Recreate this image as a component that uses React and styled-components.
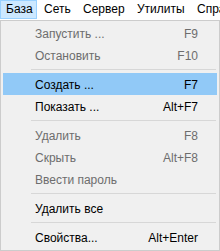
import React from "react";
import styled, { createGlobalStyle } from "styled-components";

const Global = createGlobalStyle`
  html, body { margin: 0; padding: 0; background: #ffffff; }
  body {
    font-family: "Segoe UI", "Liberation Sans", "Noto Sans", sans-serif;
    font-size: 12px;
    color: #000;
  }
`;

const menuBar = [
  { label: "База", width: 37 },
  { label: "Сеть", width: 38 },
  { label: "Сервер", width: 53 },
  { label: "Утилиты", width: 59 },
  { label: "Справка", width: 60 },
];

const items = [
  { label: "Запустить ...", key: "F9", disabled: true },
  { label: "Остановить", key: "F10", disabled: true },
  { sep: true },
  { label: "Создать ...", key: "F7", active: true },
  { label: "Показать ...", key: "Alt+F7" },
  { sep: true },
  { label: "Удалить", key: "F8", disabled: true },
  { label: "Скрыть", key: "Alt+F8", disabled: true },
  { label: "Ввести пароль", disabled: true },
  { sep: true },
  { label: "Удалить все" },
  { sep: true },
  { label: "Свойства...", key: "Alt+Enter" },
];

export default function App() {
  return (
    <Screen>
      <Global />
      <Bar>
        {menuBar.map((m, i) => (
          <BarItem key={m.label} open={i === 0} $w={m.width}>
            {m.label}
          </BarItem>
        ))}
      </Bar>
      <Dropdown>
        {items.map((it, i) =>
          it.sep ? (
            <Separator key={i} />
          ) : (
            <Row key={i} active={it.active} disabled={it.disabled}>
              <Label>{it.label}</Label>
              <Shortcut>{it.key}</Shortcut>
            </Row>
          )
        )}
      </Dropdown>
    </Screen>
  );
}

const Screen = styled.div`
  width: 220px;
  height: 251px;
  overflow: hidden;
  background: #ffffff;
`;

const Bar = styled.div`
  display: flex;
  gap: 1px;
  height: 20px;
  white-space: nowrap;
  overflow: hidden;
`;

const BarItem = styled.div`
  box-sizing: border-box;
  width: ${(p) => p.$w}px;
  height: 19px;
  line-height: 17px;
  padding: 0 0 0 5px;
  border: 1px solid ${(p) => (p.open ? "#99d1ff" : "transparent")};
  background: ${(p) => (p.open ? "#cce8ff" : "transparent")};
  flex-shrink: 0;
  overflow: hidden;
`;

const Dropdown = styled.div`
  box-sizing: border-box;
  width: 220px;
  height: 231px;
  background: #f0f0f0;
  border: 1px solid #cccccc;
  padding: 1px 2px;
  display: flex;
  flex-direction: column;
`;

const Row = styled.div`
  display: flex;
  align-items: center;
  height: 22px;
  flex-shrink: 0;
  padding: 1px 19px 0 32px;
  box-sizing: border-box;
  background: ${(p) => (p.active ? "#91c9f7" : "transparent")};
  color: ${(p) => (p.disabled ? "#6d6d6d" : "#000000")};
`;

const Label = styled.span`
  flex: 1;
  white-space: nowrap;
`;

const Shortcut = styled.span`
  white-space: nowrap;
`;

const Separator = styled.div`
  flex-shrink: 0;
  height: 7px;
  margin-left: 28px;
  margin-right: 1px;
  display: flex;
  align-items: center;
  &::before {
    content: "";
    flex: 1;
    height: 1px;
    background: #d7d7d7;
  }
`;
